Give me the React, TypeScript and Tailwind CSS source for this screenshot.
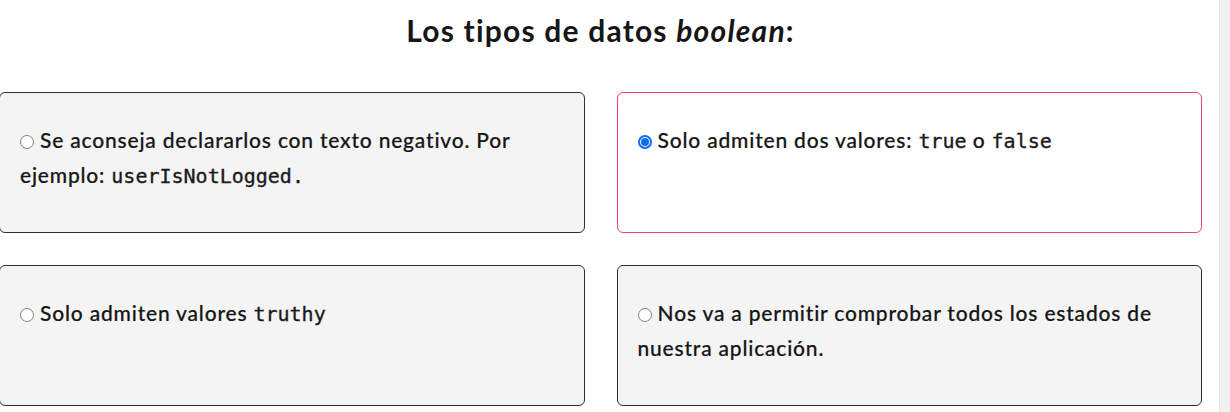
const options = [
  {
    id: 'a',
    selected: false,
    content: (
      <>
        Se aconseja declararlos con texto negativo. Por ejemplo: <Code>userIsNotLogged.</Code>
      </>
    ),
  },
  {
    id: 'b',
    selected: true,
    content: (
      <>
        Solo admiten dos valores: <Code>true</Code> o <Code>false</Code>
      </>
    ),
  },
  {
    id: 'c',
    selected: false,
    content: (
      <>
        Solo admiten valores <Code>truthy</Code>
      </>
    ),
  },
  {
    id: 'd',
    selected: false,
    content: <>Nos va a permitir comprobar todos los estados de nuestra aplicación.</>,
  },
];

function Code({ children }: { children: React.ReactNode }) {
  return (
    <code className="font-['DejaVu_Sans_Mono',monospace] text-[20px] font-normal tracking-normal text-[#1a1a1a] [-webkit-text-stroke:0.35px_#1a1a1a]">
      {children}
    </code>
  );
}

function Radio({ checked }: { checked: boolean }) {
  if (checked) {
    return (
      <span className="inline-block h-[14px] w-[14px] rounded-full border-2 border-[#0b6cf0] bg-white align-[-1px]">
        <span className="m-px block h-[8px] w-[8px] rounded-full bg-[#0b6cf0]" />
      </span>
    );
  }
  return (
    <span className="inline-block h-[14px] w-[14px] rounded-full border border-[#808080] bg-white align-[-1px]" />
  );
}

export default function App() {
  return (
    <div className="flex h-[412px] w-[1230px] overflow-hidden bg-white font-['Lato',sans-serif] text-[#161616]">
      <div className="flex-1">
        <div className="-ml-px w-[1203px]">
          <h2 className="pt-3 text-center text-[30px] leading-[36px] font-bold tracking-[1.2px]">
            Los tipos de datos <em>boolean</em>:
          </h2>

          <div className="mt-[44px] grid grid-cols-2 gap-8">
            {options.map((option) => (
              <div
                key={option.id}
                className={
                  option.selected
                    ? 'h-[141px] rounded-md border border-[#ee3f88] bg-white px-5 pt-[29px]'
                    : 'h-[141px] rounded-md border border-[#2e2e2e] bg-[#f4f4f4] px-5 pt-[29px]'
                }
              >
                <p className="text-[21px] leading-[35px] font-medium tracking-[0.8px] [-webkit-text-stroke:0.2px_#161616]">
                  <Radio checked={option.selected} /> {option.content}
                </p>
              </div>
            ))}
          </div>
        </div>
      </div>

      {/* scrollbar track */}
      <div className="w-[11px] border-l border-[#e6e6e6] bg-[#f1f1f1]" />
    </div>
  );
}
